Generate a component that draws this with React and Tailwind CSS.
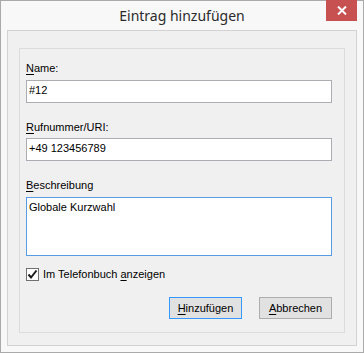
export default function App() {
  const font = { fontFamily: '"Liberation Sans", Arial, sans-serif' };
  return (
    <div className="w-[364px] h-[353px] relative border border-[#aaaaaa] bg-[#f8f8f8] px-[6px] flex flex-col" style={font}>
      <div className="h-[29px] flex items-start justify-center">
        <span className="mt-[5px] text-[15px] leading-[20px] text-[#2b2b2b]" style={{ fontFamily: '"Noto Sans", "Open Sans", sans-serif', fontSize: '14px' }}>
          Eintrag hinzufügen
        </span>
      </div>
      <div className="absolute top-[-1px] right-[6px] w-[31px] h-[21px] bg-[#c75050] flex items-center justify-center">
        <svg width="10" height="9" viewBox="0 0 10 9">
          <path d="M1 0.5 L9 8.5 M9 0.5 L1 8.5" stroke="#ffffff" strokeWidth="2" />
        </svg>
      </div>
      <div className="h-[316px] border border-[#d2d2d2] bg-[#f0f0f0] pt-[17px] px-[11px]">
        <div className="h-[285px] border border-[#dcdcdc] pl-[6px] pr-[12px] pt-[13px] flex flex-col text-[11px] leading-[13px] text-black">
          <div className="h-[13px]"><span className="underline underline-offset-[2px]">N</span>ame:</div>
          <div className="mt-[5px] h-[23px] border border-[#abadb3] bg-white px-[2px] flex items-center pb-[2px]">#12</div>
          <div className="mt-[18px] h-[13px]"><span className="underline underline-offset-[2px]">R</span>ufnummer/URI:</div>
          <div className="mt-[4px] h-[23px] border border-[#abadb3] bg-white px-[2px] flex items-center pb-[2px]">+49 123456789</div>
          <div className="mt-[18px] h-[13px]"><span className="underline underline-offset-[2px]">B</span>eschreibung</div>
          <div className="mt-[5px] h-[59px] border border-[#569de5] bg-white px-[2px] pt-[3px]">Globale Kurzwahl</div>
          <div className="mt-[12px] flex items-center h-[13px]">
            <div className="w-[13px] h-[13px] border border-[#707070] bg-white flex items-center justify-center">
              <svg width="11" height="11" viewBox="0 0 11 11">
                <path d="M1.5 5.5 L4 8.5 L9.5 1.5" stroke="#1a1a1a" strokeWidth="2" fill="none" />
              </svg>
            </div>
            <span className="ml-[4px]">Im Telefonbuch <span className="underline underline-offset-[2px]">a</span>nzeigen</span>
          </div>
          <div className="mt-[16px] flex justify-end gap-[17px]">
            <div className="w-[73px] h-[22px] border border-[#3399ff] bg-[#e1e1e1] flex items-center justify-center">
              <span><span className="underline underline-offset-[2px]">H</span>inzufügen</span>
            </div>
            <div className="w-[73px] h-[22px] border border-[#adadad] bg-[#e1e1e1] flex items-center justify-center">
              <span><span className="underline underline-offset-[2px]">A</span>bbrechen</span>
            </div>
          </div>
        </div>
      </div>
    </div>
  );
}
